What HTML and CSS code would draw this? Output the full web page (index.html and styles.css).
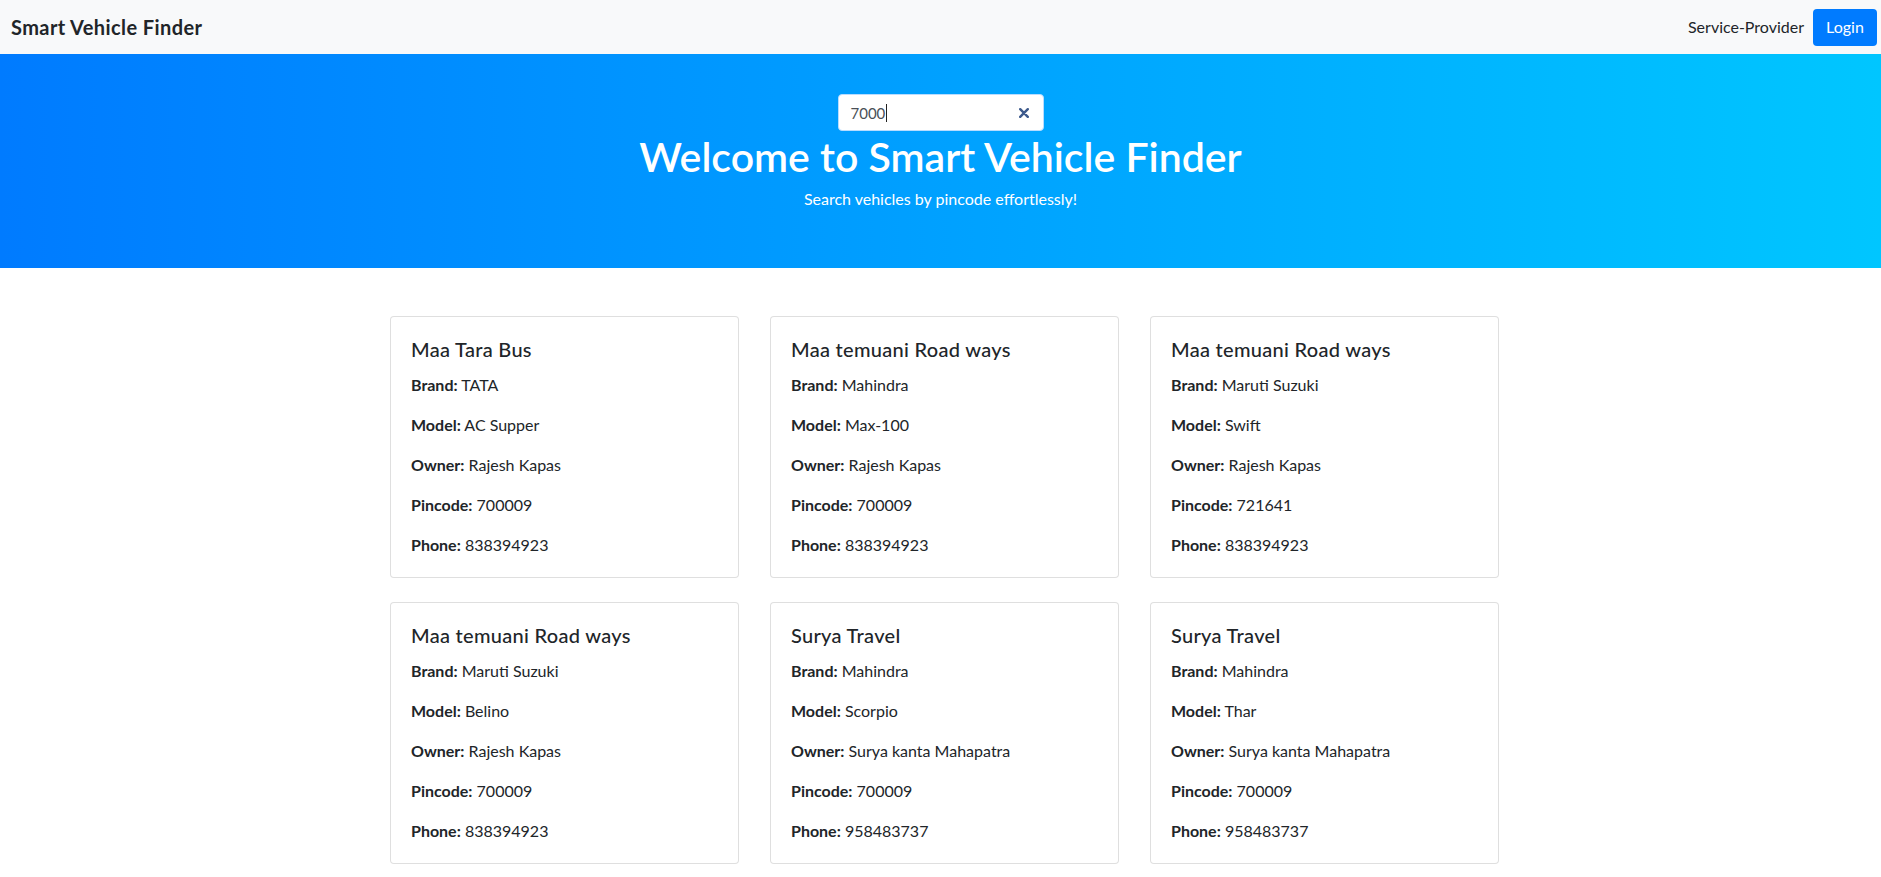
FILE: index.html
```html
<!DOCTYPE html>
<html lang="en">
<head>
<meta charset="utf-8">
<title>Smart Vehicle Finder</title>
<link rel="stylesheet" href="styles.css">
</head>
<body>
<nav class="navbar">
  <a class="brand" href="#">Smart Vehicle Finder</a>
  <div class="nav-right">
    <a class="nav-link" href="#">Service-Provider</a>
    <a class="btn-login" href="#">Login</a>
  </div>
</nav>

<header class="hero">
  <div class="search">
    <span class="search-value">7000</span><span class="caret"></span>
    <svg class="search-clear" width="10" height="10" viewBox="0 0 10 10" aria-hidden="true">
      <path d="M1.2 1.2 L8.8 8.8 M8.8 1.2 L1.2 8.8" stroke="#3d5a8c" stroke-width="2.4" stroke-linecap="round"/>
    </svg>
  </div>
  <h1 class="hero-title">Welcome to Smart Vehicle Finder</h1>
  <p class="hero-sub">Search vehicles by pincode effortlessly!</p>
</header>

<main class="cards">
  <div class="card">
    <h5 class="card-title">Maa Tara Bus</h5>
    <p><b>Brand:</b> TATA</p>
    <p><b>Model:</b> AC Supper</p>
    <p><b>Owner:</b> Rajesh Kapas</p>
    <p><b>Pincode:</b> 700009</p>
    <p><b>Phone:</b> 838394923</p>
  </div>
  <div class="card">
    <h5 class="card-title">Maa temuani Road ways</h5>
    <p><b>Brand:</b> Mahindra</p>
    <p><b>Model:</b> Max-100</p>
    <p><b>Owner:</b> Rajesh Kapas</p>
    <p><b>Pincode:</b> 700009</p>
    <p><b>Phone:</b> 838394923</p>
  </div>
  <div class="card">
    <h5 class="card-title">Maa temuani Road ways</h5>
    <p><b>Brand:</b> Maruti Suzuki</p>
    <p><b>Model:</b> Swift</p>
    <p><b>Owner:</b> Rajesh Kapas</p>
    <p><b>Pincode:</b> 721641</p>
    <p><b>Phone:</b> 838394923</p>
  </div>
  <div class="card">
    <h5 class="card-title">Maa temuani Road ways</h5>
    <p><b>Brand:</b> Maruti Suzuki</p>
    <p><b>Model:</b> Belino</p>
    <p><b>Owner:</b> Rajesh Kapas</p>
    <p><b>Pincode:</b> 700009</p>
    <p><b>Phone:</b> 838394923</p>
  </div>
  <div class="card">
    <h5 class="card-title">Surya Travel</h5>
    <p><b>Brand:</b> Mahindra</p>
    <p><b>Model:</b> Scorpio</p>
    <p><b>Owner:</b> Surya kanta Mahapatra</p>
    <p><b>Pincode:</b> 700009</p>
    <p><b>Phone:</b> 958483737</p>
  </div>
  <div class="card">
    <h5 class="card-title">Surya Travel</h5>
    <p><b>Brand:</b> Mahindra</p>
    <p><b>Model:</b> Thar</p>
    <p><b>Owner:</b> Surya kanta Mahapatra</p>
    <p><b>Pincode:</b> 700009</p>
    <p><b>Phone:</b> 958483737</p>
  </div>
</main>
</body>
</html>
```
FILE: styles.css
```css
* { box-sizing: border-box; }

html, body {
  margin: 0;
  padding: 0;
  background: #fff;
  color: #212529;
  font-family: Lato, "Noto Sans", sans-serif;
  font-size: 16px;
  line-height: 1.5;
}

a { text-decoration: none; }

.navbar {
  height: 54px;
  background: #f8f9fa;
  display: flex;
  align-items: center;
  justify-content: space-between;
  padding: 0 4px 0 11px;
}

.brand {
  font-size: 20px;
  font-weight: 700;
  color: #212529;
  line-height: 24px;
  letter-spacing: 0.4px;
}

.nav-right {
  display: flex;
  align-items: center;
  gap: 9px;
}

.nav-link {
  color: #212529;
  font-size: 16px;
}

.btn-login {
  display: flex;
  align-items: center;
  justify-content: center;
  width: 64px;
  height: 37px;
  background: #007bff;
  color: #fff;
  border-radius: 4px;
  font-size: 16px;
}

.hero {
  height: 214px;
  padding-top: 40px;
  background: linear-gradient(90deg, #007bff 0%, #00c6ff 100%);
  display: flex;
  flex-direction: column;
  align-items: center;
  color: #fff;
}

.search {
  width: 206px;
  height: 37px;
  background: #fff;
  border: 1px solid #b8dcff;
  border-radius: 4px;
  display: flex;
  align-items: center;
  padding: 0 14px 0 12px;
  color: #495057;
  font-size: 15px;
}

.search-value { line-height: 20px; }

.caret {
  width: 1px;
  height: 18px;
  background: #222;
  margin-left: 1px;
}

.search-clear { margin-left: auto; }

.hero-title {
  margin: 1px 0 0;
  font-size: 41px;
  font-weight: 600;
  line-height: 1.2;
}

.hero-sub {
  margin: 6px 0 0;
  font-size: 16px;
  line-height: 24px;
}

.cards {
  width: 1109px;
  margin: 48px 0 0 390px;
  display: grid;
  grid-template-columns: repeat(3, 349px);
  column-gap: 31px;
  row-gap: 24px;
  padding-bottom: 24px;
}

.card {
  border: 1px solid rgba(0, 0, 0, 0.125);
  border-radius: 4px;
  padding: 20px;
  background: #fff;
}

.card-title {
  margin: 0 0 12px;
  font-size: 20px;
  font-weight: 500;
  line-height: 24px;
  letter-spacing: 0.3px;
}

.card p {
  margin: 0 0 16px;
  line-height: 24px;
}

.card p:last-child { margin-bottom: 0; }

.card b { font-weight: 700; }
```
